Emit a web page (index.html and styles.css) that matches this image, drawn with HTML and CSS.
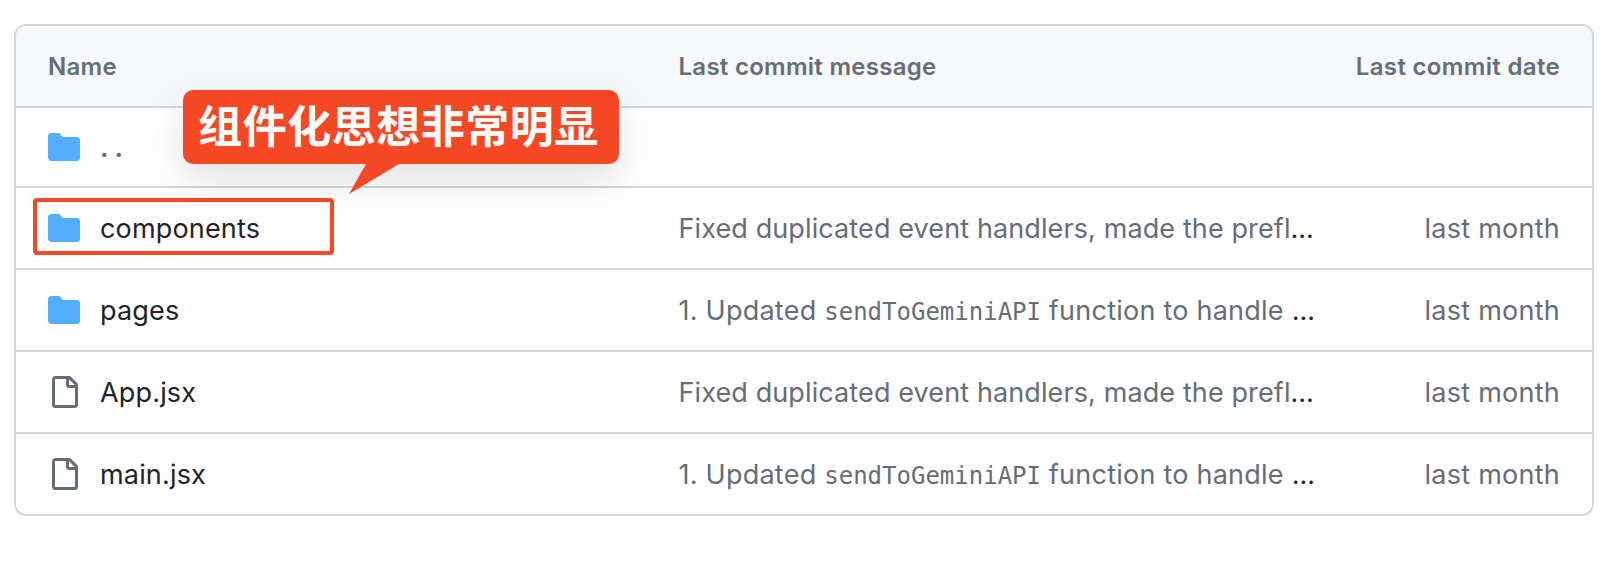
FILE: index.html
```html
<!DOCTYPE html>
<html lang="en">
<head>
<meta charset="utf-8">
<title>Files</title>
<link rel="stylesheet" href="styles.css">
</head>
<body>
<svg class="sprite" aria-hidden="true">
  <symbol id="folder" viewBox="0 0 16 16"><path d="M1.75 1A1.75 1.75 0 0 0 0 2.75v10.5C0 14.216.784 15 1.75 15h12.5A1.75 1.75 0 0 0 16 13.25v-8.5A1.75 1.75 0 0 0 14.25 3H7.5a.25.25 0 0 1-.2-.1l-.9-1.2C6.07 1.26 5.55 1 5 1H1.75Z"/></symbol>
  <symbol id="file" viewBox="0 0 16 16"><path d="M2 1.75C2 .784 2.784 0 3.75 0h6.586c.464 0 .909.184 1.237.513l2.914 2.914c.329.328.513.773.513 1.237v9.586A1.75 1.75 0 0 1 13.25 16h-9.5A1.75 1.75 0 0 1 2 14.25Zm1.75-.25a.25.25 0 0 0-.25.25v12.5c0 .138.112.25.25.25h9.5a.25.25 0 0 0 .25-.25V6h-2.75A1.75 1.75 0 0 1 9 4.25V1.5Zm6.75.062V4.25c0 .138.112.25.25.25h2.688l-.011-.013-2.914-2.914-.013-.011Z"/></symbol>
</svg>
<main class="files">
  <div class="row head">
    <span class="head-name">Name</span>
    <span class="head-message">Last commit message</span>
    <span class="head-date">Last commit date</span>
  </div>
  <div class="row parent">
    <div class="name"><svg class="icon folder"><use href="#folder"/></svg><span class="dots">..</span></div>
  </div>
  <div class="row">
    <div class="name"><svg class="icon folder"><use href="#folder"/></svg><span class="components">components</span></div>
    <div class="message"><span class="fixed">Fixed duplicated event handlers, made the prefl</span><span class="more">...</span></div>
    <div class="date">last month</div>
  </div>
  <div class="row">
    <div class="name"><svg class="icon folder"><use href="#folder"/></svg><span>pages</span></div>
    <div class="message"><span class="updated">1. Updated <code>sendToGeminiAPI</code> function to handle </span><span class="more">...</span></div>
    <div class="date">last month</div>
  </div>
  <div class="row">
    <div class="name"><svg class="icon file"><use href="#file"/></svg><span>App.jsx</span></div>
    <div class="message"><span class="fixed">Fixed duplicated event handlers, made the prefl</span><span class="more">...</span></div>
    <div class="date">last month</div>
  </div>
  <div class="row">
    <div class="name"><svg class="icon file"><use href="#file"/></svg><span>main.jsx</span></div>
    <div class="message"><span class="updated">1. Updated <code>sendToGeminiAPI</code> function to handle </span><span class="more">...</span></div>
    <div class="date">last month</div>
  </div>
</main>
<div class="highlight"></div>
<div class="callout" lang="zh-CN">
  <span class="callout-text">组件化思想非常明显</span>
  <svg class="tail" viewBox="0 0 50 30"><path d="M17 0 0 30 50 0Z"/></svg>
</div>
</body>
</html>
```
FILE: styles.css
```css
* { box-sizing: border-box; }

body {
  margin: 0;
  padding: 24px 22px 0 14px;
  height: 564px;
  overflow: hidden;
  background: #fff;
  color: #1f2328;
  font-family: Inter, "Noto Sans", sans-serif;
  font-size: 27px;
}

.sprite { position: absolute; width: 0; height: 0; }

.files {
  border: 2px solid #d0d7de;
  border-radius: 12px;
  overflow: hidden;
}

.row {
  display: grid;
  grid-template-columns: 630.5px 635.5px 1fr;
  align-items: center;
  height: 82px;
  padding: 0 32px;
  border-bottom: 2px solid #d0d7de;
  white-space: nowrap;
}

.row:last-child { height: 80px; border-bottom: 0; }
.row.parent { height: 80px; }

.head {
  background: #f6f8fa;
  color: #656d76;
  font-size: 24px;
  font-weight: 600;
  letter-spacing: 0.27px;
}

.head-date, .date { justify-self: end; }
.head-date { letter-spacing: 0.33px; }
.name { display: flex; align-items: center; gap: 20px; letter-spacing: 0.17px; }
.message, .date { color: #656d76; }
.date { letter-spacing: 0.25px; }
.message > span { white-space: pre; }
.message .fixed { letter-spacing: 0.11px; }
.message .updated { letter-spacing: 0.24px; }
.message .more { color: #1f2328; }
.dots { color: #656d76; letter-spacing: 6px; font-weight: 600; }

code {
  font-family: "DejaVu Sans Mono", monospace;
  font-size: 24px;
  letter-spacing: 0;
}

.icon { width: 32px; height: 32px; flex: none; }
.folder { fill: #54aeff; }
.file { fill: #656d76; }

.highlight {
  position: absolute;
  left: 33px;
  top: 198px;
  width: 301px;
  height: 57px;
  border: 4px solid #f64824;
  border-radius: 4px;
}

.callout {
  position: absolute;
  left: 183px;
  top: 90px;
  width: 436px;
  height: 74px;
  padding: 0 5px 6px 0;
  display: flex;
  align-items: center;
  justify-content: center;
  border-radius: 10px;
  background: #f64824;
  box-shadow: 0 16px 40px rgba(0, 0, 0, 0.12);
  color: #fff;
  font-family: "Noto Sans CJK SC", sans-serif;
  font-size: 44px;
  font-weight: 700;
  line-height: 68px;
  white-space: nowrap;
}

.callout-text { letter-spacing: 0.5px; }

.tail {
  position: absolute;
  left: 166px;
  top: 73.5px;
  width: 50px;
  height: 30px;
  fill: #f64824;
}
```
